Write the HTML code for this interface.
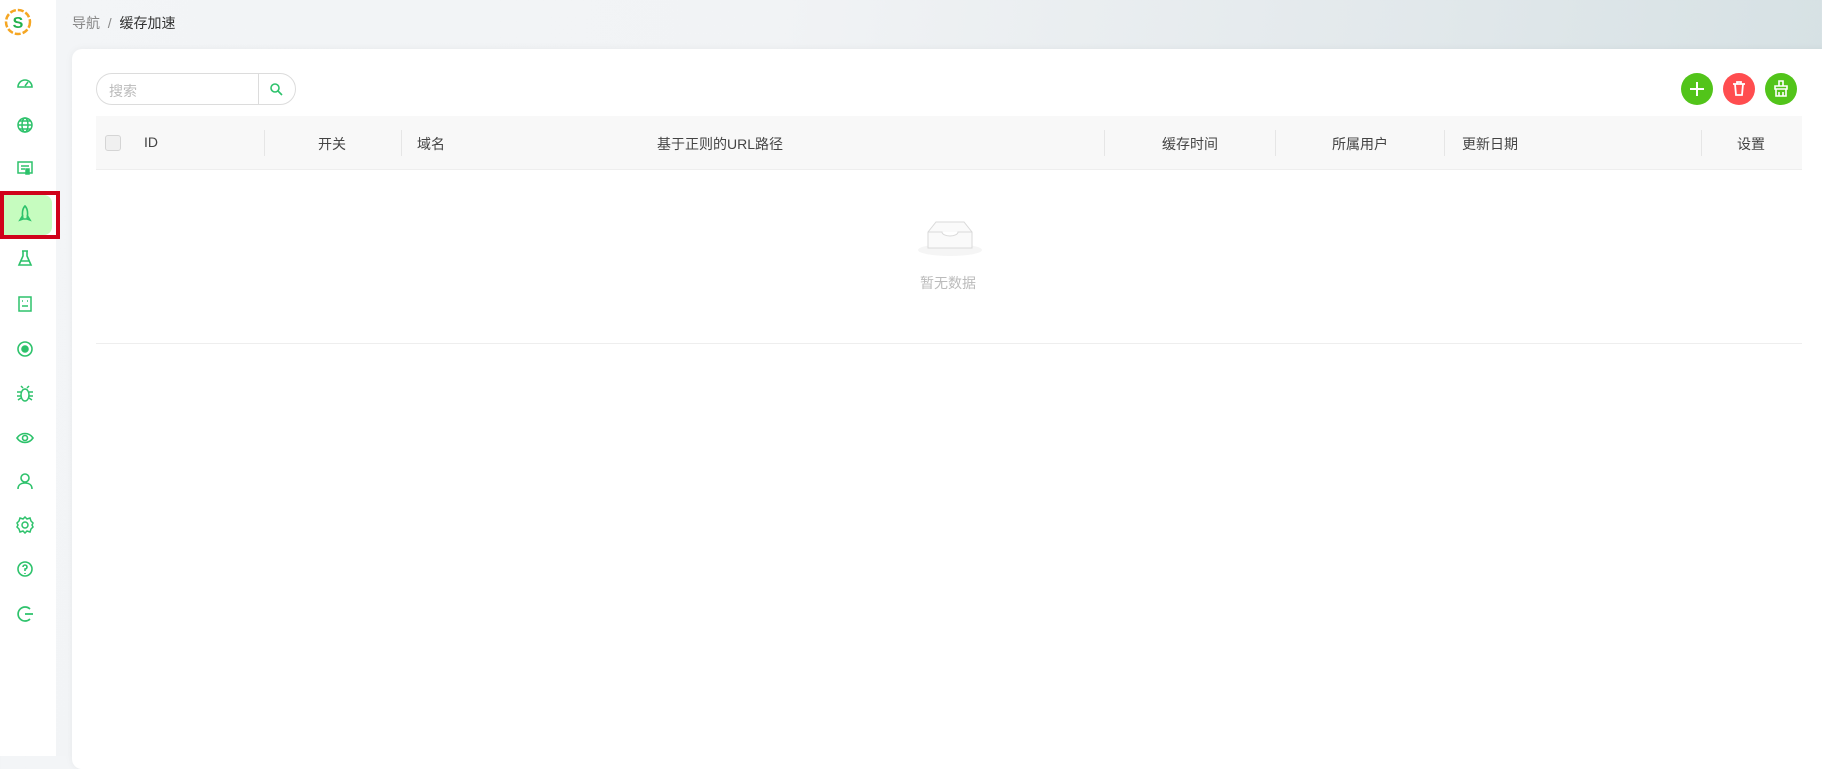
<!DOCTYPE html>
<html><head><meta charset="utf-8"><style>
*{margin:0;padding:0;box-sizing:border-box}
body{width:1822px;height:756px;overflow:hidden;font-family:"Liberation Sans","Noto Sans CJK SC",sans-serif;background:linear-gradient(100deg,#f3f5f7 0%,#f1f3f5 40%,#e3e9ec 70%,#d3dfe2 100%);position:relative;font-size:14px;color:#333}
.side{position:absolute;left:0;top:0;width:56px;height:756px;background:#fff}
.ic{position:absolute;left:16px;width:18px;height:18px}
.crumb{position:absolute;left:72px;top:13px;font-size:14px;color:#888}
.crumb b{font-weight:normal;color:#333}
.card{position:absolute;left:72px;top:49px;width:1760px;height:720px;background:#fff;border-radius:10px;box-shadow:0 0 8px rgba(0,0,0,.05)}
.search{position:absolute;left:96px;top:73px;width:200px;height:32px;border:1px solid #dcdcdc;border-radius:16px;background:#fff}
.search span{position:absolute;left:12px;top:7px;color:#bbb;font-size:14px}
.search i{position:absolute;left:161px;top:0;width:1px;height:30px;background:#dcdcdc}
.btn{position:absolute;top:73px;width:32px;height:32px;border-radius:50%}
.th{position:absolute;left:96px;top:116px;width:1706px;height:54px;background:#f8f8f8;border-bottom:1px solid #eee}
.th span{position:absolute;top:18px;font-size:14px;color:#444}
.th i{position:absolute;top:14px;width:1px;height:26px;background:#e6e6e6}
</style></head><body>
<div class="side">
<svg style="position:absolute;left:4px;top:5px" width="28" height="32" viewBox="0 0 28 32"><circle cx="14" cy="17" r="12" fill="none" stroke="#f5a623" stroke-width="2.5" stroke-dasharray="6 2"/><text x="14" y="23" text-anchor="middle" font-size="16" font-weight="bold" fill="#22b14c" font-family="Liberation Sans">S</text></svg>
<svg class="ic" style="top:74px" viewBox="0 0 18 18" fill="none" stroke="#2dc26b" stroke-width="1.6"><path d="M2 13a7 7 0 1 1 14 0z"/><path d="M9 12l3-4"/></svg>
<svg class="ic" style="top:116px" viewBox="0 0 18 18" fill="none" stroke="#2dc26b" stroke-width="1.5"><circle cx="9" cy="9" r="7"/><ellipse cx="9" cy="9" rx="3" ry="7"/><path d="M2 9h14M3 5h12M3 13h12"/></svg>
<svg class="ic" style="top:159px" viewBox="0 0 18 18" fill="none" stroke="#2dc26b" stroke-width="1.5"><rect x="2" y="3" width="14" height="11"/><path d="M5 7h8M5 10h4"/><rect x="10" y="10" width="3" height="5" fill="#2dc26b"/></svg>
<div style="position:absolute;left:0;top:191px;width:60px;height:48px;border:4px solid #d0021b"><div style="position:absolute;left:0;top:0;width:48px;height:40px;background:#c6fcbf;border-radius:0 8px 8px 0"></div></div>
<svg class="ic" style="top:205px" viewBox="0 0 18 18" fill="none" stroke="#2dc26b" stroke-width="1.6"><path d="M9 1c3 3 3 8 2 13H7C6 9 6 4 9 1zM7 10l-3 5 3-1M11 10l3 5-3-1"/></svg>
<svg class="ic" style="top:249px" viewBox="0 0 18 18" fill="none" stroke="#2dc26b" stroke-width="1.6"><path d="M6 2h6M7 2v5l-4 9h12l-4-9V2M5 12h8"/></svg>
<svg class="ic" style="top:295px" viewBox="0 0 18 18" fill="none" stroke="#2dc26b" stroke-width="1.5"><rect x="3" y="2" width="12" height="14"/><path d="M6 6h1M11 6h1M6 11h6"/></svg>
<svg class="ic" style="top:340px" viewBox="0 0 18 18" fill="none" stroke="#2dc26b" stroke-width="1.6"><circle cx="9" cy="9" r="7"/><circle cx="9" cy="9" r="3" fill="#2dc26b"/></svg>
<svg class="ic" style="top:385px" viewBox="0 0 18 18" fill="none" stroke="#2dc26b" stroke-width="1.5"><ellipse cx="9" cy="10" rx="4" ry="6"/><path d="M1 7h4M13 7h4M1 11h4M13 11h4M2 15l3-2M16 15l-3-2M7 3L5 1M11 3l2-2"/></svg>
<svg class="ic" style="top:429px" viewBox="0 0 18 18" fill="none" stroke="#2dc26b" stroke-width="1.6"><path d="M1 9c4-6 12-6 16 0-4 6-12 6-16 0z"/><circle cx="9" cy="9" r="2.5"/></svg>
<svg class="ic" style="top:472px" viewBox="0 0 18 18" fill="none" stroke="#2dc26b" stroke-width="1.6"><circle cx="9" cy="6" r="4"/><path d="M2 17c0-4 3-6 7-6s7 2 7 6"/></svg>
<svg class="ic" style="top:516px" viewBox="0 0 18 18" fill="none" stroke="#2dc26b" stroke-width="1.5"><circle cx="9" cy="9" r="3"/><path d="M9 1l2 2 3-1 1 3 2 2-1 2 1 2-2 2-1 3-3-1-2 2-2-2-3 1-1-3-2-2 1-2-1-2 2-2 1-3 3 1z"/></svg>
<svg class="ic" style="top:560px" viewBox="0 0 18 18" fill="none" stroke="#2dc26b" stroke-width="1.6"><circle cx="9" cy="9" r="7"/><path d="M7 7a2 2 0 1 1 2 2v2M9 13v1"/></svg>
<svg class="ic" style="top:605px" viewBox="0 0 18 18" fill="none" stroke="#2dc26b" stroke-width="1.7"><path d="M14 4a7 7 0 1 0 0 10M9 9h8"/></svg>
</div>
<div class="crumb">导航 &nbsp;/&nbsp; <b>缓存加速</b></div>
<div class="card"></div>
<div class="search"><span>搜索</span><i></i><svg style="position:absolute;left:172px;top:8px" width="14" height="14" viewBox="0 0 14 14" fill="none" stroke="#2dc26b" stroke-width="1.6"><circle cx="6" cy="6" r="4"/><path d="M9 9l4 4"/></svg></div>
<div class="btn" style="left:1681px;background:#52c41a"><svg width="32" height="32" viewBox="0 0 32 32" stroke="#fff" stroke-width="2"><path d="M16 9v14M9 16h14"/></svg></div>
<div class="btn" style="left:1723px;background:#ff4d4f"><svg width="32" height="32" viewBox="0 0 32 32" fill="none" stroke="#fff" stroke-width="1.8"><path d="M10 11h12M14 11V9h4v2M12 11l1 11h6l1-11"/></svg></div>
<div class="btn" style="left:1765px;background:#52c41a"><svg width="32" height="32" viewBox="0 0 32 32" fill="none" stroke="#fff" stroke-width="1.6"><path d="M14 8h4v5h-4zM10 13h12v3H10zM11 16v7h10v-7M14 19v4M18 19v4"/></svg></div>
<div class="th">
<div style="position:absolute;left:9px;top:19px;width:16px;height:16px;border:1px solid #d5d5d5;border-radius:3px;background:#f0f0f0"></div>
<span style="left:48px">ID</span><i style="left:168px"></i>
<span style="left:222px">开关</span><i style="left:305px"></i>
<span style="left:321px">域名</span>
<span style="left:561px">基于正则的URL路径</span><i style="left:1008px"></i>
<span style="left:1066px">缓存时间</span><i style="left:1179px"></i>
<span style="left:1236px">所属用户</span><i style="left:1348px"></i>
<span style="left:1366px">更新日期</span><i style="left:1605px"></i>
<span style="left:1641px">设置</span>
</div>
<svg style="position:absolute;left:918px;top:216px" width="64" height="42" viewBox="0 0 64 42"><ellipse cx="32" cy="34" rx="32" ry="6" fill="#f5f5f5"/><path d="M10 16l8-10h28l8 10v16H10z" fill="#fafafa" stroke="#d9d9d9"/><path d="M10 16h14a8 4 0 0 0 16 0h14" fill="#fff" stroke="#d9d9d9"/></svg>
<div style="position:absolute;left:920px;top:273px;color:#bbb;font-size:14px">暂无数据</div>
<div style="position:absolute;left:96px;top:343px;width:1706px;height:1px;background:#eee"></div>
</body></html>
